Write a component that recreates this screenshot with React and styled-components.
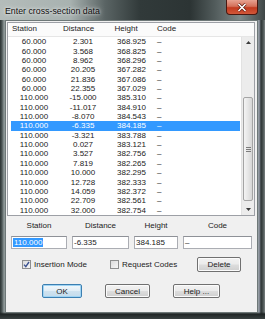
import React from 'react'
import styled, { createGlobalStyle } from 'styled-components'

const GlobalStyle = createGlobalStyle`
  body {
    margin: 0;
    font-family: "Liberation Sans", Arial, sans-serif;
  }
`

const rows = [
  ['60.000', '2.301', '368.925'],
  ['60.000', '3.568', '368.825'],
  ['60.000', '8.962', '368.296'],
  ['60.000', '20.205', '367.282'],
  ['60.000', '21.836', '367.086'],
  ['60.000', '22.355', '367.029'],
  ['110.000', '-15.000', '385.310'],
  ['110.000', '-11.017', '384.910'],
  ['110.000', '-8.070', '384.543'],
  ['110.000', '-6.335', '384.185'],
  ['110.000', '-3.321', '383.788'],
  ['110.000', '0.027', '383.121'],
  ['110.000', '3.527', '382.756'],
  ['110.000', '7.819', '382.265'],
  ['110.000', '10.000', '382.295'],
  ['110.000', '12.728', '382.333'],
  ['110.000', '14.059', '382.372'],
  ['110.000', '22.709', '382.561'],
  ['110.000', '32.000', '382.754'],
]
const SELECTED = 9

const Window = styled.div`
  width: 265px;
  height: 319px;
  box-sizing: border-box;
  display: flex;
  flex-direction: column;
  padding: 0 7px 6px 5px;
  background:
    linear-gradient(90deg, #b4bcba 0, #a8b2b0 70px, #5a6464 105px, #313a3a 140px, #2c3434 190px, #525c5c 215px, #7e8888 240px, #3e4646 265px) top / 100% 20px no-repeat,
    linear-gradient(180deg, rgba(0,0,0,0) 0, rgba(0,0,0,0) 312px, #1e2424 314px, #3a4242 319px),
    linear-gradient(90deg, #2a3232 0, #4e5858 2px, #8e9898 4px, #8e9898 258px, #9aa0ae 259px, #2e3636 261px, #4a5252 263px, #7a8282 265px);
`

const TitleBar = styled.div`
  height: 20px;
  flex: none;
  display: flex;
  justify-content: space-between;
  align-items: flex-start;
`

const Title = styled.span`
  margin-top: 6px;
  font-size: 8.8px;
  line-height: 10px;
  color: #101010;
  text-shadow: 0 0 3px rgba(255,255,255,0.9), 0 0 6px rgba(255,255,255,0.6);
`

const CloseButton = styled.div`
  width: 32px;
  height: 15px;
  box-sizing: border-box;
  display: flex;
  align-items: center;
  justify-content: center;
  border: 1px solid #4a1810;
  border-top: none;
  border-radius: 0 0 4px 4px;
  background: linear-gradient(180deg, #e7a291 0%, #d4705a 45%, #c23a1f 55%, #d2583a 100%);
`

const Client = styled.div`
  flex: 1;
  display: flex;
  flex-direction: column;
  background: #f0f0f0;
  border: 1px solid #6e7878;
  padding: 1px 2px 0 1px;
`

const ListPanel = styled.div`
  height: 194px;
  box-sizing: border-box;
  border: 1px solid #9da0a6;
  background: #fff;
  display: flex;
  flex-direction: column;
  font-size: 8px;
  color: #222;
`

const Header = styled.div`
  height: 14px;
  flex: none;
  display: grid;
  grid-template-columns: 51px 51.6px 42.4px 1fr;
  padding-left: 4px;
  line-height: 12px;
  background: #fbfbfb;
  border-bottom: 1px solid #e6e6e6;
  box-sizing: border-box;
`

const Body = styled.div`
  flex: 1;
  display: flex;
  min-height: 0;
`

const Rows = styled.div`
  flex: 1;
  padding: 0 1px 0 3px;
  overflow: hidden;
`

const Row = styled.div`
  height: 9.36px;
  display: grid;
  grid-template-columns: 46px 52px 45px 1fr;
  align-items: center;
  line-height: 9px;
  background: ${p => (p.$selected ? '#3399ff' : 'transparent')};
  color: ${p => (p.$selected ? '#fff' : '#222')};
`

const Num = styled.span`
  text-align: center;
`

const Code = styled.span`
  padding-left: 3px;
`

const ScrollBar = styled.div`
  width: 13px;
  flex: none;
  display: flex;
  flex-direction: column;
  background: #ececec;
  border-left: 1px solid #e2e2e2;
  box-sizing: border-box;
`

const ArrowButton = styled.div`
  height: 11px;
  flex: none;
  display: flex;
  align-items: center;
  justify-content: center;
`

const Track = styled.div`
  flex: 1;
  display: flex;
  flex-direction: column;
  padding: ${p => p.$offset}px 1px 0 1px;
`

const Thumb = styled.div`
  height: ${p => p.$size}px;
  box-sizing: border-box;
  border: 1px solid #a4a4a4;
  border-radius: 2px;
  background: linear-gradient(90deg, #f4f4f4 0%, #e6e6e6 50%, #d6d6d6 100%);
  display: flex;
  align-items: center;
  justify-content: center;
`

const Grip = styled.div`
  width: 5px;
  height: 5px;
  background: repeating-linear-gradient(180deg, #7c7c7c 0, #7c7c7c 1px, transparent 1px, transparent 2px);
`

const Fields = styled.div`
  display: grid;
  grid-template-columns: 56px 57px 44px 69px;
  column-gap: 5px;
  row-gap: 5px;
  padding: 5px 0 0 4px;
  font-size: 8px;
  color: #222;
`

const FieldLabel = styled.div`
  height: 10px;
  line-height: 10px;
  text-align: center;
`

const Edit = styled.div`
  height: 13px;
  box-sizing: border-box;
  border: 1px solid #abadb3;
  border-top-color: #8e9197;
  background: #fff;
  padding-left: 1px;
  line-height: 11px;
  white-space: nowrap;
`

const Selection = styled.span`
  background: #3399ff;
  color: #fff;
  padding: 0 1px;
`

const OptionRow = styled.div`
  display: flex;
  align-items: center;
  height: 15px;
  margin-top: 8px;
  padding-left: 15px;
  font-size: 8px;
  color: #222;
`

const Option = styled.label`
  width: ${p => p.$width}px;
  display: flex;
  align-items: center;
  gap: 3px;
`

const Box = styled.span`
  width: 9px;
  height: 9px;
  box-sizing: border-box;
  border: 1px solid #8e8f8f;
  background: linear-gradient(135deg, #dcdcdc 0%, #f6f6f6 100%);
  display: flex;
  align-items: center;
  justify-content: center;
`

const Button = styled.div`
  width: ${p => p.$width}px;
  height: ${p => p.$height || 14}px;
  box-sizing: border-box;
  border: 1px solid ${p => (p.$default ? '#3c7fb1' : '#707070')};
  border-radius: 2px;
  background: ${p =>
    p.$default
      ? 'linear-gradient(180deg, #f2f8fc 0%, #e2eef6 48%, #cfe2ef 52%, #c4dcec 100%)'
      : 'linear-gradient(180deg, #f2f2f2 0%, #ebebeb 48%, #dddddd 52%, #cfcfcf 100%)'};
  box-shadow: ${p => (p.$default ? 'inset 0 0 0 1px #9fd4f4' : 'inset 0 0 0 1px #fbfbfb')};
  display: flex;
  align-items: center;
  justify-content: center;
  font-size: 8px;
  color: #222;
`

const ButtonRow = styled.div`
  display: flex;
  justify-content: center;
  gap: 23px;
  margin-top: 12px;
`

const Check = () => (
  <svg width="7" height="7" viewBox="0 0 7 7">
    <path d="M1 3.6 L2.8 5.6 L6 1" fill="none" stroke="#3b5290" strokeWidth="1.4" />
  </svg>
)

const Arrow = ({ down }) => (
  <svg width="5" height="3" viewBox="0 0 5 3">
    <path d={down ? 'M0 0 H5 L2.5 3 Z' : 'M0 3 H5 L2.5 0 Z'} fill="#3a3a3a" />
  </svg>
)

const CloseX = () => (
  <svg width="10" height="9" viewBox="0 0 10 9">
    <path d="M1.5 1 L8.5 8 M8.5 1 L1.5 8" stroke="#5a1a10" strokeWidth="3" />
    <path d="M1.5 1 L8.5 8 M8.5 1 L1.5 8" stroke="#ffffff" strokeWidth="1.6" />
  </svg>
)

export default function App() {
  return (
    <>
      <GlobalStyle />
      <Window>
        <TitleBar>
          <Title>Enter cross-section data</Title>
          <CloseButton><CloseX /></CloseButton>
        </TitleBar>
        <Client>
          <ListPanel>
            <Header>
              <span>Station</span>
              <span>Distance</span>
              <span>Height</span>
              <span>Code</span>
            </Header>
            <Body>
              <Rows>
                {rows.map((r, i) => (
                  <Row key={i} $selected={i === SELECTED}>
                    <Num>{r[0]}</Num>
                    <Num>{r[1]}</Num>
                    <Num>{r[2]}</Num>
                    <Code>–</Code>
                  </Row>
                ))}
              </Rows>
              <ScrollBar>
                <ArrowButton><Arrow /></ArrowButton>
                <Track $offset={49}>
                  <Thumb $size={104}><Grip /></Thumb>
                </Track>
                <ArrowButton><Arrow down /></ArrowButton>
              </ScrollBar>
            </Body>
          </ListPanel>

          <Fields>
            <FieldLabel>Station</FieldLabel>
            <FieldLabel>Distance</FieldLabel>
            <FieldLabel>Height</FieldLabel>
            <FieldLabel>Code</FieldLabel>
            <Edit><Selection>110.000</Selection></Edit>
            <Edit>-6.335</Edit>
            <Edit>384.185</Edit>
            <Edit>–</Edit>
          </Fields>

          <OptionRow>
            <Option $width={88}>
              <Box><Check /></Box>
              Insertion Mode
            </Option>
            <Option $width={87}>
              <Box />
              Request Codes
            </Option>
            <Button $width={44} $height={15}>Delete</Button>
          </OptionRow>

          <ButtonRow>
            <Button $width={40} $default>OK</Button>
            <Button $width={45}>Cancel</Button>
            <Button $width={47}>Help ...</Button>
          </ButtonRow>
        </Client>
      </Window>
    </>
  )
}
